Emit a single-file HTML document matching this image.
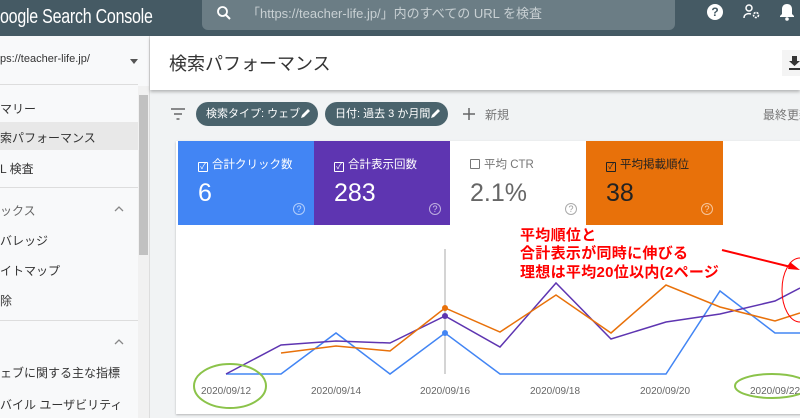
<!DOCTYPE html>
<html><head><meta charset="utf-8"><style>
*{margin:0;padding:0;box-sizing:border-box}
body{width:800px;height:418px;overflow:hidden;position:relative;background:#f1f3f4;font-family:"Liberation Sans","Noto Sans CJK JP",sans-serif}
.a{position:absolute}
.hdr{left:0;top:0;width:800px;height:36px;background:#455a64}
.side{left:0;top:36px;width:150px;height:382px;background:#f8f9fa;border-right:1px solid #ddd}
.si{position:absolute;left:0;font-size:12px;color:#333;white-space:nowrap}
.ln{position:absolute;left:0;width:138px;height:1px;background:#ddd}
.chip{position:absolute;top:102px;height:24px;border-radius:12px;background:#4a636c;color:#fff;font-size:11px;line-height:24px;padding-left:10px;white-space:nowrap}
.pen{position:absolute;right:7px;top:6px}
.card{position:absolute;top:141px;height:84px;width:137px}
.card .l{position:absolute;left:20px;top:15px;font-size:11.5px;white-space:nowrap}
.card .v{position:absolute;left:20px;top:38px;font-size:25px}
.cb{display:inline-block;width:10px;height:10px;border:1.3px solid currentColor;border-radius:1px;margin-right:4px;vertical-align:-1px;font-size:8px;line-height:7px;text-align:center}
.q{position:absolute;right:10px;bottom:10px;width:12px;height:12px;border:1.2px solid rgba(255,255,255,.6);border-radius:50%;font-size:9px;line-height:10px;text-align:center;color:rgba(255,255,255,.7)}
</style></head><body>
<div class="a hdr"></div>
<div class="a" style="left:0;top:6px;font-size:20px;color:#fff;white-space:nowrap;letter-spacing:-0.3px;transform:scaleX(0.8);transform-origin:0 0">oogle Search Console</div>
<div class="a" style="left:202px;top:0;width:473px;height:30px;background:#6b7d85;border-radius:0 0 6px 6px"></div>
<svg class="a" style="left:216px;top:5px" width="16" height="16" viewBox="0 0 16 16"><circle cx="6.5" cy="6.5" r="4.5" fill="none" stroke="#fff" stroke-width="1.8"/><path d="M10 10l4 4" stroke="#fff" stroke-width="2"/></svg>
<div class="a" style="left:247px;top:3px;font-size:13px;color:#c8d0d3;white-space:nowrap">「https://teacher-life.jp/」内のすべての URL を検査</div>
<div class="a" style="left:707px;top:4px;width:16px;height:16px;border-radius:50%;background:#fff;color:#455a64;font-size:12px;font-weight:bold;text-align:center;line-height:16px">?</div>
<svg class="a" style="left:743px;top:4px" width="18" height="16" viewBox="0 0 18 16"><circle cx="6" cy="4" r="3" fill="none" stroke="#fff" stroke-width="1.5"/><path d="M1 14c0-4 4-5 7-4" fill="none" stroke="#fff" stroke-width="1.5"/><circle cx="13" cy="11" r="2.5" fill="none" stroke="#fff" stroke-width="1.6" stroke-dasharray="2 1"/></svg>
<svg class="a" style="left:779px;top:3px" width="16" height="18" viewBox="0 0 16 18"><path d="M8 1c-3 0-5 2-5 5v5l-2 2v1h14v-1l-2-2V6c0-3-2-5-5-5z" fill="#fff"/><circle cx="8" cy="16" r="1.8" fill="#fff"/></svg>

<div class="a side"></div>
<div class="si" style="top:53px;font-size:11px">ps://teacher-life.jp/</div>
<div class="a" style="left:130px;top:59px;border:4px solid transparent;border-top:5px solid #555"></div>
<div class="ln" style="top:84px"></div>
<div class="si" style="top:100px">マリー</div>
<div class="a" style="left:0;top:122px;width:138px;height:28px;background:#e8e8e8"></div>
<div class="si" style="top:129px">索パフォーマンス</div>
<div class="si" style="top:160px">L 検査</div>
<div class="ln" style="top:187px"></div>
<div class="si" style="top:202px;color:#666">ックス</div>
<svg class="a" style="left:114px;top:206px" width="10" height="6"><path d="M1 5l4-4 4 4" fill="none" stroke="#888" stroke-width="1.3"/></svg>
<div class="si" style="top:232px">バレッジ</div>
<div class="si" style="top:262px">イトマップ</div>
<div class="si" style="top:292px">除</div>
<div class="ln" style="top:320px"></div>
<svg class="a" style="left:114px;top:339px" width="10" height="6"><path d="M1 5l4-4 4 4" fill="none" stroke="#888" stroke-width="1.3"/></svg>
<div class="si" style="top:364px">ェブに関する主な指標</div>
<div class="si" style="top:396px">バイル ユーザビリティ</div>
<div class="a" style="left:138px;top:86px;width:11px;height:332px;background:#f1f1f1"></div>
<div class="a" style="left:139px;top:95px;width:9px;height:160px;background:#c1c1c1"></div>

<div class="a" style="left:150px;top:36px;width:650px;height:54px;background:#fff;box-shadow:0 2px 3px rgba(0,0,0,.25)"></div>
<div class="a" style="left:169px;top:50px;font-size:18px;color:#333;white-space:nowrap">検索パフォーマンス</div>
<div class="a" style="left:782px;top:50px;width:20px;height:26px;background:#f4f4f4"></div>
<svg class="a" style="left:789px;top:56px" width="11" height="14" viewBox="0 0 11 14"><path d="M3 0h5v5h3l-5.5 5L0 5h3z M0 12h11v2H0z" fill="#333"/></svg>

<svg class="a" style="left:170px;top:108px" width="16" height="12" viewBox="0 0 16 12"><path d="M1 1h14M4 6h8M6.5 11h3" stroke="#666" stroke-width="1.6"/></svg>
<div class="chip" style="left:196px;width:122px">検索タイプ: ウェブ<svg class="pen" width="11" height="11" viewBox="0 0 11 11"><path d="M1 10l1-3 6-6 2 2-6 6z" fill="#fff"/></svg></div>
<div class="chip" style="left:325px;width:123px">日付: 過去 3 か月間<svg class="pen" width="11" height="11" viewBox="0 0 11 11"><path d="M1 10l1-3 6-6 2 2-6 6z" fill="#fff"/></svg></div>
<svg class="a" style="left:463px;top:108px" width="12" height="12"><path d="M6 0v12M0 6h12" stroke="#666" stroke-width="1.5"/></svg>
<div class="a" style="left:485px;top:106px;font-size:12px;color:#777">新規</div>
<div class="a" style="left:763px;top:106px;font-size:12px;color:#777;white-space:nowrap">最終更新</div>

<div class="a" style="left:176px;top:141px;width:630px;height:273px;background:#fff;box-shadow:0 1px 2px rgba(0,0,0,.25)"></div>
<div class="card" style="left:178px;background:#4285f4;color:#fff"><div class="l"><span class="cb">✓</span>合計クリック数</div><div class="v">6</div><div class="q">?</div></div>
<div class="card" style="left:314px;background:#5e35b1;color:#fff"><div class="l"><span class="cb">✓</span>合計表示回数</div><div class="v">283</div><div class="q">?</div></div>
<div class="card" style="left:450px;background:#fff;color:#777"><div class="l"><span class="cb"></span>平均 CTR</div><div class="v" style="color:#666">2.1%</div><div class="q" style="border-color:#aaa;color:#999">?</div></div>
<div class="card" style="left:586px;background:#e8710a;color:#222"><div class="l"><span class="cb">✓</span>平均掲載順位</div><div class="v">38</div><div class="q">?</div></div>

<svg class="a" style="left:0;top:0" width="800" height="418">
<line x1="445" y1="249" x2="445" y2="374" stroke="#aaa" stroke-width="1"/>
<polyline fill="none" stroke="#4285f4" stroke-width="1.5" points="226,374 281,374 336,333 390,374 445,333 500,374 666,374 720,291 775,333 800,333"/>
<polyline fill="none" stroke="#5e35b1" stroke-width="1.5" points="226,374 281,345 336,341 390,343 445,316 500,347 556,283 611,339 666,322 720,314 775,301 800,288"/>
<polyline fill="none" stroke="#e8710a" stroke-width="1.5" points="281,353 336,346 390,351 445,308 500,332 556,295 611,333 666,285 720,307 775,321 800,313"/>
<circle cx="445" cy="308" r="3" fill="#e8710a"/><circle cx="445" cy="316" r="3" fill="#5e35b1"/><circle cx="445" cy="333" r="3" fill="#4285f4"/>
<g font-size="10" fill="#666" text-anchor="middle" font-family="Liberation Sans,sans-serif">
<text x="226" y="394">2020/09/12</text><text x="336" y="394">2020/09/14</text><text x="445" y="394">2020/09/16</text><text x="555" y="394">2020/09/18</text><text x="665" y="394">2020/09/20</text><text x="775" y="394">2020/09/22</text></g>
<ellipse cx="230" cy="386" rx="36" ry="22" fill="none" stroke="#8bc34a" stroke-width="2"/>
<ellipse cx="772" cy="386" rx="37" ry="12" fill="none" stroke="#8bc34a" stroke-width="2"/>
<path d="M722 250L795 268" stroke="#f00" stroke-width="2"/><path d="M800 270l-10 -8 -2 7z" fill="#f00"/>
<path d="M800 258 A18 32 0 0 0 800 322" fill="none" stroke="#f00" stroke-width="1"/>
<g font-size="15" font-weight="bold" fill="#f00" stroke="#fff" stroke-width="2.5" paint-order="stroke" letter-spacing="0.3" font-family="Liberation Sans,Noto Sans CJK JP,sans-serif">
<text x="520" y="240">平均順位と</text><text x="520" y="258">合計表示が同時に伸びる</text><text x="520" y="277">理想は平均20位以内(2ページ</text></g>
</svg>
</body></html>
